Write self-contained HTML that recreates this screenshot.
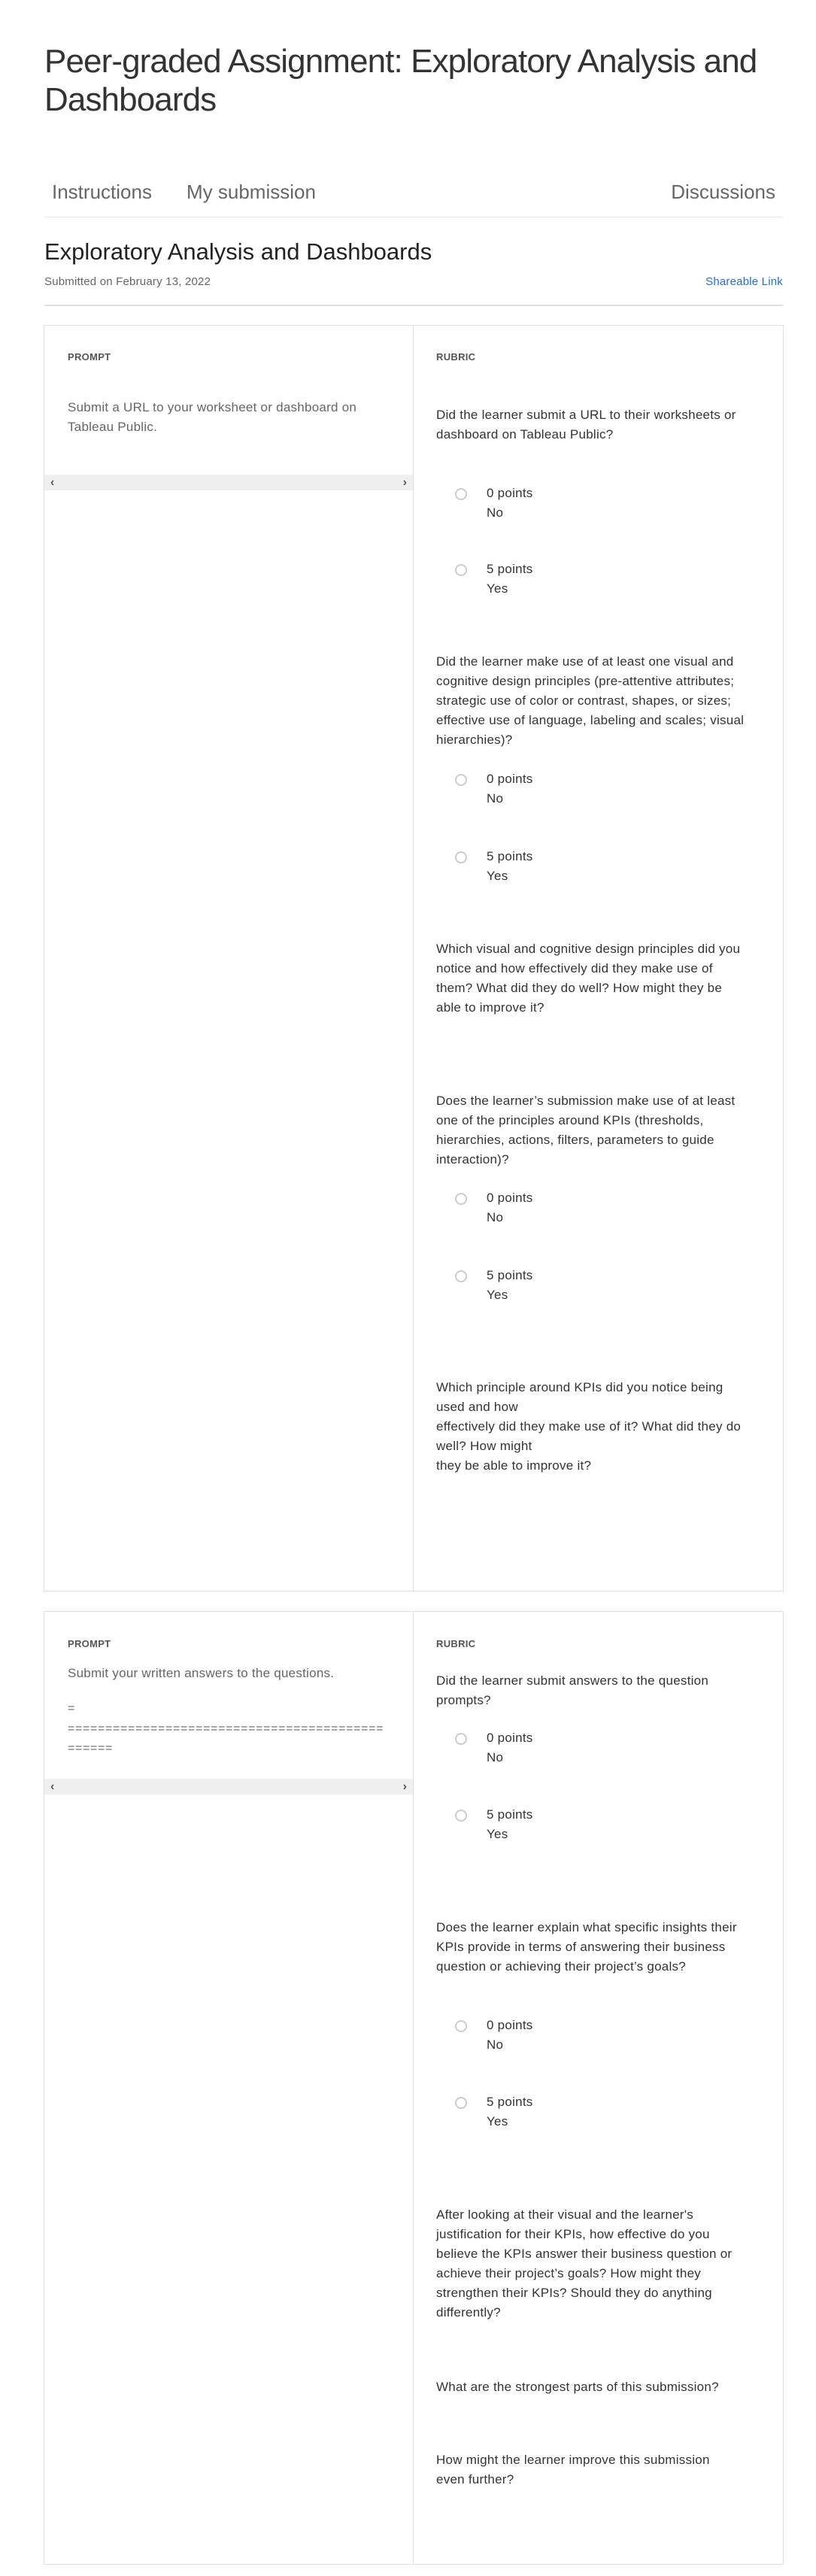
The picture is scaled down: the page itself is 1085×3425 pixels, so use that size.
<!DOCTYPE html>
<html><head><meta charset="utf-8">
<style>
*{margin:0;padding:0;box-sizing:border-box}
body{width:1085px;height:3425px;background:#fff;position:relative;font-family:"Liberation Sans",sans-serif;overflow:hidden}
.a{position:absolute;white-space:nowrap}
.t{font-size:17px;line-height:26px;letter-spacing:0.25px;color:#333}
.p{color:#666}
.lbl{font-size:13px;line-height:16px;font-weight:bold;color:#555;letter-spacing:0.3px}
.card{position:absolute;left:58px;width:984px;border:1px solid #e0e0e0}
.mid{position:absolute;left:549px;width:1px;background:#e0e0e0}
.sb{position:absolute;left:59px;width:490px;height:21px;background:#efefef}
.sb span{position:absolute;top:0;font-size:16px;line-height:21px;color:#555;font-weight:bold}
.r{position:absolute;left:605px;width:16px;height:16px;border:2px solid #ccc;border-radius:50%}
.o{left:647px}
.hr{position:absolute;left:59px;width:982px}
</style></head><body>

<div class="a" style="left:59px;top:56px;font-size:44px;line-height:51px;letter-spacing:-0.9px;color:#333">Peer-graded Assignment: Exploratory Analysis and<br>Dashboards</div>

<div class="a" style="left:69px;top:240px;font-size:26px;line-height:30px;color:#666">Instructions</div>
<div class="a" style="left:248px;top:240px;font-size:26px;line-height:30px;color:#666">My submission</div>
<div class="a" style="right:54px;top:240px;font-size:26px;line-height:30px;color:#666">Discussions</div>
<div class="hr" style="top:288px;height:1px;background:#e8e8e8"></div>

<div class="a" style="left:59px;top:317px;font-size:31px;line-height:36px;color:#222">Exploratory Analysis and Dashboards</div>
<div class="a" style="left:59px;top:365px;font-size:15px;line-height:20px;color:#666;letter-spacing:0.2px">Submitted on February 13, 2022</div>
<div class="a" style="right:44px;top:365px;font-size:15px;line-height:20px;color:#1f6fe0;letter-spacing:0.2px">Shareable Link</div>
<div class="hr" style="top:405px;height:2px;background:#e0e0e0"></div>

<!-- Card 1 -->
<div class="card" style="top:432px;height:1684px"></div>
<div class="mid" style="top:432px;height:1684px"></div>
<div class="a lbl" style="left:90px;top:467px">PROMPT</div>
<div class="a lbl" style="left:580px;top:467px">RUBRIC</div>
<div class="a t p" style="left:90px;top:529px">Submit a URL to your worksheet or dashboard on<br>Tableau Public.</div>
<div class="sb" style="top:631px"><span style="left:8px">‹</span><span style="right:8px">›</span></div>

<div class="a t" style="left:580px;top:539px">Did the learner submit a URL to their worksheets or<br>dashboard on Tableau Public?</div>
<div class="r" style="top:649px"></div><div class="a t o" style="top:643px">0 points<br>No</div>
<div class="r" style="top:750px"></div><div class="a t o" style="top:744px">5 points<br>Yes</div>

<div class="a t" style="left:580px;top:867px">Did the learner make use of at least one visual and<br>cognitive design principles (pre-attentive attributes;<br>strategic use of color or contrast, shapes, or sizes;<br>effective use of language, labeling and scales; visual<br>hierarchies)?</div>
<div class="r" style="top:1029px"></div><div class="a t o" style="top:1023px">0 points<br>No</div>
<div class="r" style="top:1132px"></div><div class="a t o" style="top:1126px">5 points<br>Yes</div>

<div class="a t" style="left:580px;top:1249px">Which visual and cognitive design principles did you<br>notice and how effectively did they make use of<br>them? What did they do well? How might they be<br>able to improve it?</div>

<div class="a t" style="left:580px;top:1451px">Does the learner’s submission make use of at least<br>one of the principles around KPIs (thresholds,<br>hierarchies, actions, filters, parameters to guide<br>interaction)?</div>
<div class="r" style="top:1586px"></div><div class="a t o" style="top:1580px">0 points<br>No</div>
<div class="r" style="top:1689px"></div><div class="a t o" style="top:1683px">5 points<br>Yes</div>

<div class="a t" style="left:580px;top:1832px">Which principle around KPIs did you notice being<br>used and how<br>effectively did they make use of it? What did they do<br>well? How might<br>they be able to improve it?</div>

<!-- Card 2 -->
<div class="card" style="top:2142px;height:1268px"></div>
<div class="mid" style="top:2142px;height:1268px"></div>
<div class="a lbl" style="left:90px;top:2178px">PROMPT</div>
<div class="a lbl" style="left:580px;top:2178px">RUBRIC</div>
<div class="a t p" style="left:90px;top:2212px">Submit your written answers to the questions.</div>
<div class="a t p" style="left:90px;top:2259px;font-size:16px;line-height:26.5px;letter-spacing:0.66px">=<br>==========================================<br>======</div>
<div class="sb" style="top:2365px"><span style="left:8px">‹</span><span style="right:8px">›</span></div>

<div class="a t" style="left:580px;top:2222px">Did the learner submit answers to the question<br>prompts?</div>
<div class="r" style="top:2304px"></div><div class="a t o" style="top:2298px">0 points<br>No</div>
<div class="r" style="top:2406px"></div><div class="a t o" style="top:2400px">5 points<br>Yes</div>

<div class="a t" style="left:580px;top:2550px">Does the learner explain what specific insights their<br>KPIs provide in terms of answering their business<br>question or achieving their project’s goals?</div>
<div class="r" style="top:2686px"></div><div class="a t o" style="top:2680px">0 points<br>No</div>
<div class="r" style="top:2788px"></div><div class="a t o" style="top:2782px">5 points<br>Yes</div>

<div class="a t" style="left:580px;top:2932px">After looking at their visual and the learner's<br>justification for their KPIs, how effective do you<br>believe the KPIs answer their business question or<br>achieve their project’s goals? How might they<br>strengthen their KPIs? Should they do anything<br>differently?</div>

<div class="a t" style="left:580px;top:3161px">What are the strongest parts of this submission?</div>
<div class="a t" style="left:580px;top:3258px">How might the learner improve this submission<br>even further?</div>

</body></html>
